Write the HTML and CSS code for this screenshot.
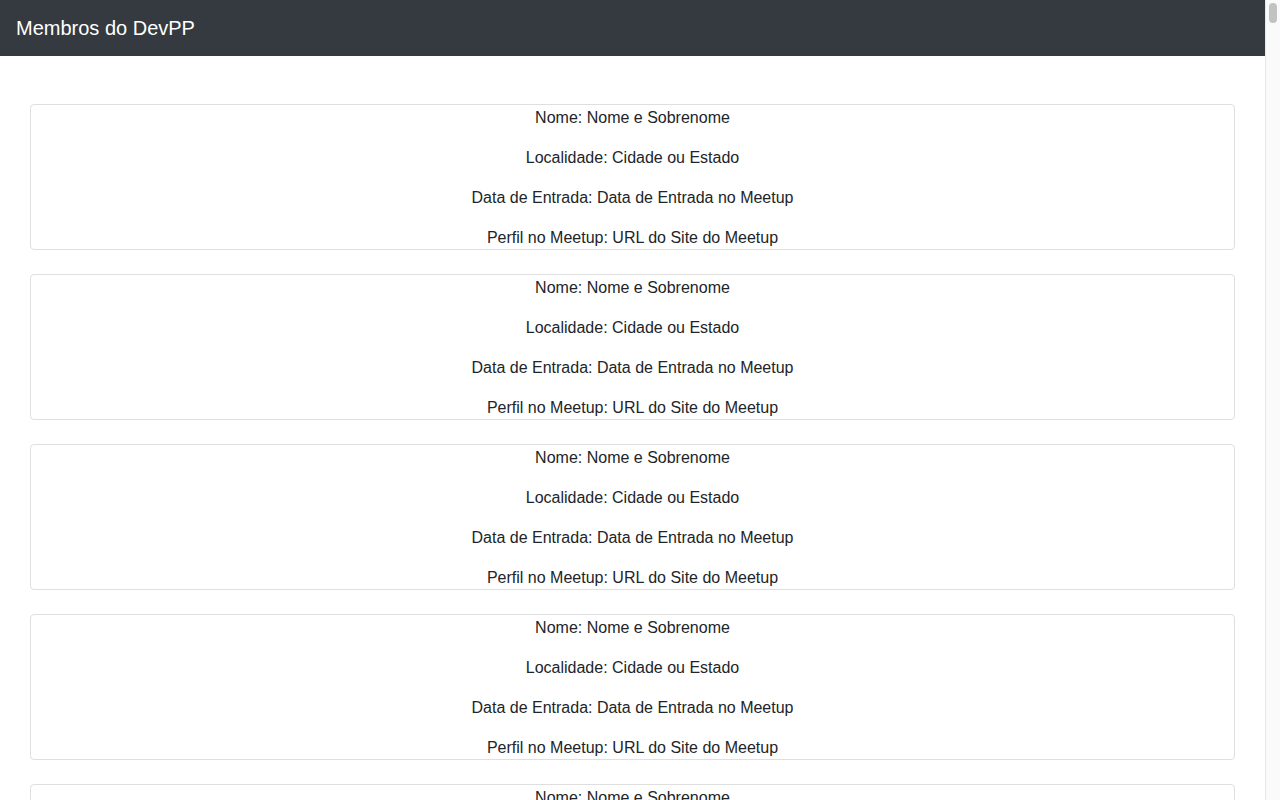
FILE: index.html
```html
<!DOCTYPE html>
<html lang="pt-BR">
<head>
<meta charset="utf-8">
<title>Membros do DevPP</title>
<link rel="stylesheet" href="styles.css">
</head>
<body>
<div class="page">
  <nav class="navbar"><span class="brand">Membros do DevPP</span></nav>
  <main class="content">
    <div class="card"><p>Nome: Nome e Sobrenome</p><p>Localidade: Cidade ou Estado</p><p>Data de Entrada: Data de Entrada no Meetup</p><p>Perfil no Meetup: URL do Site do Meetup</p></div>
    <div class="card"><p>Nome: Nome e Sobrenome</p><p>Localidade: Cidade ou Estado</p><p>Data de Entrada: Data de Entrada no Meetup</p><p>Perfil no Meetup: URL do Site do Meetup</p></div>
    <div class="card"><p>Nome: Nome e Sobrenome</p><p>Localidade: Cidade ou Estado</p><p>Data de Entrada: Data de Entrada no Meetup</p><p>Perfil no Meetup: URL do Site do Meetup</p></div>
    <div class="card"><p>Nome: Nome e Sobrenome</p><p>Localidade: Cidade ou Estado</p><p>Data de Entrada: Data de Entrada no Meetup</p><p>Perfil no Meetup: URL do Site do Meetup</p></div>
    <div class="card"><p>Nome: Nome e Sobrenome</p><p>Localidade: Cidade ou Estado</p><p>Data de Entrada: Data de Entrada no Meetup</p><p>Perfil no Meetup: URL do Site do Meetup</p></div>
    <div class="card"><p>Nome: Nome e Sobrenome</p><p>Localidade: Cidade ou Estado</p><p>Data de Entrada: Data de Entrada no Meetup</p><p>Perfil no Meetup: URL do Site do Meetup</p></div>
  </main>
</div>
<div class="scrollbar"><div class="thumb"></div></div>
</body>
</html>
```
FILE: styles.css
```css
html, body {
  margin: 0;
  padding: 0;
}
html {
  overflow: hidden;
}
body {
  font-family: "Liberation Sans", Arial, Helvetica, sans-serif;
  font-size: 16px;
  line-height: 24px;
  color: #212529;
  background: #fff;
}
.page {
  margin-right: 15px;
}
.navbar {
  background: #343a40;
  padding: 8px 16px;
  display: flex;
  align-items: center;
}
.brand {
  color: #fff;
  font-size: 20px;
  line-height: 30px;
  padding: 5px 0;
}
.content {
  padding: 48px 30px 24px;
  display: flex;
  flex-direction: column;
  gap: 24px;
}
.card {
  border: 1px solid #dfdfdf;
  border-radius: 4px;
  text-align: center;
  display: flex;
  flex-direction: column;
  gap: 16px;
  padding-top: 1px;
  padding-bottom: 0;
}
.card p {
  margin: 0;
}
.card p:last-child {
  margin-bottom: -1px;
}
.scrollbar {
  position: fixed;
  top: 0;
  right: 0;
  width: 14px;
  height: 100vh;
  background: #fafafa;
  border-left: 1px solid #e8e8e8;
}
.thumb {
  margin: 3px 0 0 3px;
  width: 8px;
  height: 20px;
  border-radius: 4px;
  background: #c2c2c2;
}
```
